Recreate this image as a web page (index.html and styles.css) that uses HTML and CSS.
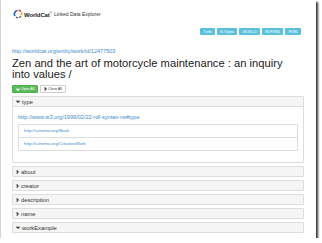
FILE: index.html
```html
<!DOCTYPE html>
<html lang="en">
<head>
    <meta charset="UTF-8">
    <meta name="viewport" content="width=device-width, initial-scale=1.0">
    <title>WorldCat Linked Data Explorer</title>
    <link rel="stylesheet" href="styles.css">
</head>
<body>
    <div class="window">
        <div class="navbar">
            <svg class="logo" viewBox="0 0 20 20" width="10" height="10">
                <path d="M9 3 A7 7 0 0 0 4 14" stroke="#2a63b5" stroke-width="3.4" fill="none"/>
                <path d="M11 2.5 A7 7 0 0 1 16 5" stroke="#e2332c" stroke-width="3" fill="none"/>
                <path d="M17 7 A7 7 0 0 1 17 12" stroke="#f29a1d" stroke-width="3" fill="none"/>
                <path d="M16 14 A7 7 0 0 1 12 17" stroke="#4aa84a" stroke-width="3" fill="none"/>
                <path d="M10 17.5 A7 7 0 0 1 6 16" stroke="#7a3f98" stroke-width="3" fill="none"/>
            </svg>
            <span class="brand">WorldCat<sup>®</sup></span>
            <span class="brand-sub">Linked Data Explorer</span>
        </div>

        <div class="container">
            <div class="formats">
                <a class="btn btn-info" href="#">Turtle</a>
                <a class="btn btn-info" href="#">N-Triples</a>
                <a class="btn btn-info" href="#">JSON-LD</a>
                <a class="btn btn-info" href="#">RDF/XML</a>
                <a class="btn btn-info" href="#">HTML</a>
            </div>

            <a class="entity-url" href="#">http://worldcat.org/entity/work/id/12477503</a>
            <h1 class="title">Zen and the art of motorcycle maintenance : an inquiry into values /</h1>

            <div class="toggles">
                <button class="btn btn-success">
                    <svg class="chev" viewBox="0 0 4 3" width="4" height="3"><polyline points="0.5,0.6 2,2.2 3.5,0.6"/></svg>
                    Open All
                </button>
                <button class="btn btn-default">
                    <svg class="chev" viewBox="0 0 3 4" width="3" height="4"><polyline points="0.6,0.5 2.2,2 0.6,3.5"/></svg>
                    Close All
                </button>
            </div>

            <div class="panel-group">
                <div class="panel">
                    <div class="panel-heading">
                        <svg class="chev" viewBox="0 0 4 3" width="4" height="3"><polyline points="0.5,0.6 2,2.2 3.5,0.6"/></svg>
                        type
                    </div>
                    <div class="panel-body">
                        <a class="predicate" href="#">http://www.w3.org/1999/02/22-rdf-syntax-ns#type</a>
                        <ul class="list-group">
                            <li><a href="#">http://schema.org/Book</a></li>
                            <li><a href="#">http://schema.org/CreativeWork</a></li>
                        </ul>
                    </div>
                </div>
                <div class="panel">
                    <div class="panel-heading">
                        <svg class="chev" viewBox="0 0 3 4" width="3" height="4"><polyline points="0.6,0.5 2.2,2 0.6,3.5"/></svg>
                        about
                    </div>
                </div>
                <div class="panel">
                    <div class="panel-heading">
                        <svg class="chev" viewBox="0 0 3 4" width="3" height="4"><polyline points="0.6,0.5 2.2,2 0.6,3.5"/></svg>
                        creator
                    </div>
                </div>
                <div class="panel">
                    <div class="panel-heading">
                        <svg class="chev" viewBox="0 0 3 4" width="3" height="4"><polyline points="0.6,0.5 2.2,2 0.6,3.5"/></svg>
                        description
                    </div>
                </div>
                <div class="panel">
                    <div class="panel-heading">
                        <svg class="chev" viewBox="0 0 3 4" width="3" height="4"><polyline points="0.6,0.5 2.2,2 0.6,3.5"/></svg>
                        name
                    </div>
                </div>
                <div class="panel">
                    <div class="panel-heading">
                        <svg class="chev" viewBox="0 0 4 3" width="4" height="3"><polyline points="0.5,0.6 2,2.2 3.5,0.6"/></svg>
                        workExample
                    </div>
                </div>
            </div>
        </div>
    </div>
</body>
</html>
```

FILE: styles.css
```css
body {
    margin: 0;
    background: #fff;
    font-family: 'Liberation Sans', Arial, sans-serif;
    color: #333;
}

a {
    color: #428bca;
    text-decoration: none;
}

.window {
    width: 316px;
    height: 238px;
    overflow: hidden;
    background: #fff;
    border-left: 1px solid #d4d4d4;
    box-sizing: border-box;
    box-shadow: 2px 2px 2px rgba(0, 0, 0, 0.8);
}

.navbar {
    display: flex;
    align-items: center;
    padding: 9px 0 0 12px;
    height: 10px;
}

.logo {
    margin-right: 1px;
}

.brand {
    font-size: 6px;
    font-weight: bold;
    color: #222;
    letter-spacing: -0.1px;
}

.brand sup {
    font-size: 3px;
    font-weight: normal;
}

.brand-sub {
    font-size: 5px;
    color: #333;
    margin-left: 2px;
}

.container {
    padding: 0 12px 0 11px;
}

.btn {
    display: inline-flex;
    align-items: center;
    gap: 1px;
    border-radius: 1px;
    font-family: inherit;
    cursor: pointer;
}

.formats {
    display: flex;
    justify-content: flex-end;
    gap: 2px;
    margin: 9px 3px 0 0;
}

.btn-info {
    background: #5bc0de;
    color: #fff;
    font-size: 3.5px;
    height: 7px;
    padding: 0 3px;
}

.entity-url {
    display: block;
    font-size: 5.5px;
    line-height: 6px;
    margin-top: 13px;
}

.title {
    font-size: 11.2px;
    font-weight: normal;
    line-height: 11px;
    margin: 4px 6px 5px 0;
    color: #222;
}

.toggles {
    display: flex;
    gap: 2px;
}

.toggles .btn {
    font-size: 3.5px;
    height: 8px;
    padding: 0 3px;
    border: 0.5px solid #ccc;
}

.btn-success {
    background: #5cb85c;
    border-color: #4cae4c !important;
    color: #fff;
}

.btn-default {
    background: #fff;
    color: #333;
}

.chev {
    fill: none;
    stroke: currentColor;
    stroke-width: 1.2;
}

.panel-group {
    margin-top: 3px;
}

.panel {
    border: 0.5px solid #ddd;
    border-radius: 1px;
    margin-bottom: 3px;
}

.panel-heading {
    display: flex;
    align-items: center;
    gap: 2px;
    background: #f5f5f5;
    height: 9px;
    padding: 0 3px;
    font-size: 5.8px;
    color: #333;
}

.panel-body {
    padding: 7px 5px 11px;
    border-top: 0.5px solid #ddd;
}

.predicate {
    display: block;
    font-size: 5.6px;
    line-height: 6px;
}

.list-group {
    list-style: none;
    margin: 4px 0 0;
    padding: 0;
    border: 0.5px solid #ddd;
    border-radius: 1px;
}

.list-group li {
    font-size: 4.4px;
    line-height: 6px;
    padding: 3px 5px;
}

.list-group li + li {
    border-top: 0.5px solid #ddd;
}
```
